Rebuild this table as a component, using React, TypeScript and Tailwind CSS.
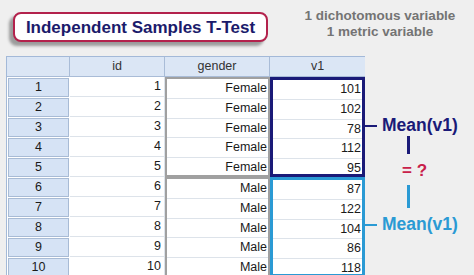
const font = { fontFamily: '"Liberation Sans", Arial, sans-serif' };

const rows = [
  { id: 1, gender: "Female", v1: 101 },
  { id: 2, gender: "Female", v1: 102 },
  { id: 3, gender: "Female", v1: 78 },
  { id: 4, gender: "Female", v1: 112 },
  { id: 5, gender: "Female", v1: 95 },
  { id: 6, gender: "Male", v1: 87 },
  { id: 7, gender: "Male", v1: 122 },
  { id: 8, gender: "Male", v1: 104 },
  { id: 9, gender: "Male", v1: 86 },
  { id: 10, gender: "Male", v1: 118 },
];

function HeaderCell({ label, className = "" }: { label: string; className?: string }) {
  return (
    <div
      className={`h-[20px] flex items-center justify-center bg-[#dbe6f5] border-b border-r border-[#a9bcd7] text-[12.5px] text-[#333] ${className}`}
    >
      {label}
    </div>
  );
}

function GroupBox({ values, border, pad }: { values: (string | number)[]; border: string; pad: string }) {
  return (
    <div className={`h-[100px] flex flex-col bg-white ${border}`}>
      {values.map((v, i) => (
        <div
          key={i}
          className={`flex-1 flex items-center justify-end ${pad} text-[12.5px] text-[#1a1a1a] ${
            i < values.length - 1 ? "border-b border-[#dde3ea]" : ""
          }`}
        >
          {v}
        </div>
      ))}
    </div>
  );
}

export default function App() {
  const female = rows.slice(0, 5);
  const male = rows.slice(5);

  return (
    <div className="w-[474px] h-[275px] overflow-hidden bg-[#efefef]" style={font}>
      {/* top: title + description */}
      <div className="h-[56px] flex items-start">
        <div className="ml-[13px] mt-[12px] w-[255px] h-[30px] rounded-[8px] border-2 border-[#b3224c] bg-white flex items-center justify-center shadow-[-4px_4px_3px_rgba(0,0,0,0.35)]">
          <span className="text-[17px] font-bold text-[#1b1b6b] leading-none">Independent Samples T-Test</span>
        </div>
        <div className="flex-1 mt-[8px] flex flex-col items-center text-[13.5px] font-bold text-[#747474] leading-[16px] pl-[18px]">
          <span>1 dichotomous variable</span>
          <span>1 metric variable</span>
        </div>
      </div>

      <div className="flex">
        {/* data table */}
        <div className="ml-[6px] flex border-l border-t border-[#a3b9d8] bg-white">
          {/* row headers */}
          <div className="w-[63px] flex flex-col">
            <HeaderCell label="" />
            {rows.map((r) => (
              <div key={r.id} className="h-[20px] pl-px pr-px pt-px">
                <div className="h-[19px] flex items-center justify-center bg-[#d6e3f5] border border-[#a8bbd5] text-[12.5px] text-[#1a1a1a]">
                  {r.id}
                </div>
              </div>
            ))}
          </div>

          {/* id */}
          <div className="w-[95px] flex flex-col">
            <HeaderCell label="id" />
            {rows.map((r) => (
              <div
                key={r.id}
                className="h-[20px] flex items-center justify-end pr-[3px] border-b border-r border-[#dde3ea] text-[12.5px] text-[#1a1a1a]"
              >
                {r.id}
              </div>
            ))}
          </div>

          {/* gender */}
          <div className="w-[105px] flex flex-col">
            <HeaderCell label="gender" />
            <GroupBox values={female.map((r) => r.gender)} border="border-2 border-[#a0a0a0]" pad="pr-[1px]" />
            <GroupBox values={male.map((r) => r.gender)} border="border-2 border-[#a0a0a0]" pad="pr-[1px]" />
          </div>

          {/* v1 */}
          <div className="w-[95px] flex flex-col">
            <HeaderCell label="v1" className="border-r-0" />
            <GroupBox values={female.map((r) => r.v1)} border="border-[3px] border-[#1a1a78]" pad="pr-[1px]" />
            <GroupBox values={male.map((r) => r.v1)} border="border-[3px] border-[#2a9ad4]" pad="pr-[1px]" />
          </div>
        </div>

        {/* annotations */}
        <div className="flex-1 flex flex-col pt-[60px] font-bold">
          <div className="h-[20px] flex items-center">
            <div className="w-[12px] h-[2px] bg-[#1a1a78]" />
            <span className="ml-[5px] text-[17.5px] text-[#1a1a78] leading-none">Mean(v1)</span>
          </div>
          <div className="ml-[42px] w-[3px] h-[18px] bg-[#1a1a78]" />
          <div className="ml-[37px] mt-[6px] h-[20px] flex items-center text-[17px] text-[#c8204a] leading-none">
            = ?
          </div>
          <div className="ml-[42px] mt-[5px] w-[3px] h-[23px] bg-[#2a9ad4]" />
          <div className="mt-[7px] h-[20px] flex items-center">
            <div className="w-[12px] h-[2px] bg-[#2a9ad4]" />
            <span className="ml-[5px] text-[17.5px] text-[#2a9ad4] leading-none">Mean(v1)</span>
          </div>
        </div>
      </div>
    </div>
  );
}
